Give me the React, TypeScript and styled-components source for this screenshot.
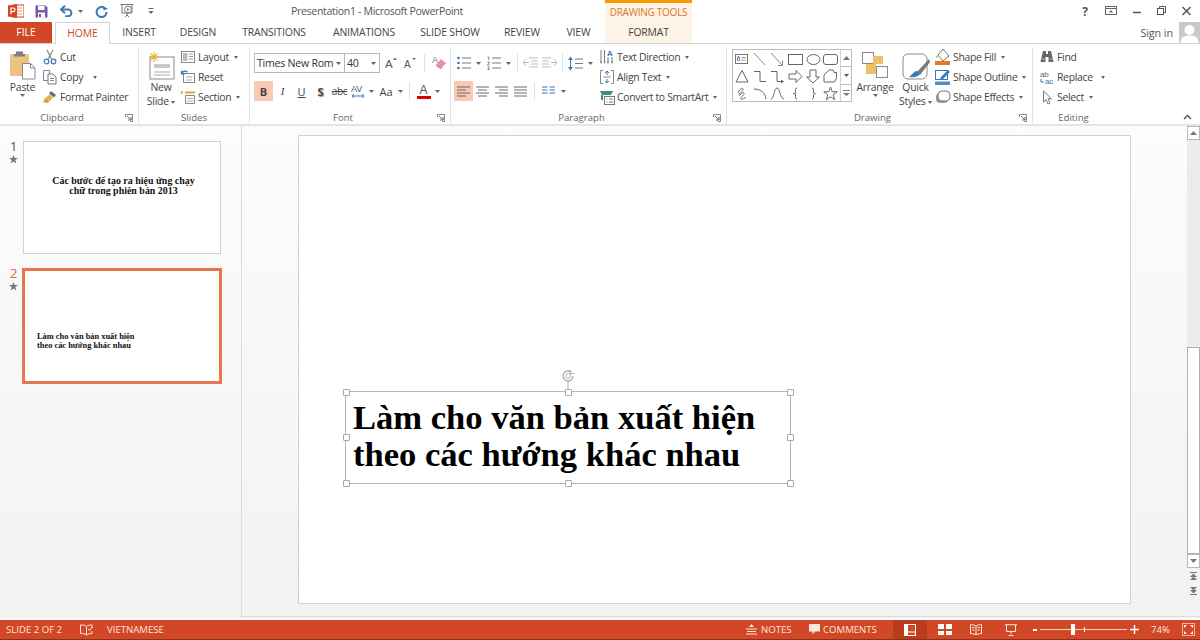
import React from 'react';
import styled, { createGlobalStyle } from 'styled-components';

const GlobalStyle = createGlobalStyle`
  html, body { margin: 0; padding: 0; background: #fff; overflow: hidden; }
  * { box-sizing: border-box; }
  #root { width: 1200px; height: 640px; font-family: 'Open Sans', 'Noto Sans', sans-serif; color: #444; }
`;

// --- shell ---
const Page = styled.div`
  width: 1200px;
  height: 640px;
  display: flex;
  flex-direction: column;
  overflow: hidden;
`;

const TitleBar = styled.div`
  height: 22px;
  display: flex;
  align-items: stretch;
`;

const Qat = styled.div`
  width: 291px;
  display: flex;
  align-items: center;
  padding-left: 8px;
`;

const QatSlot = styled.div<{ $w: number }>`
  width: ${p => p.$w}px;
  display: flex;
  align-items: center;
`;

const WindowTitle = styled.div`
  width: 314px;
  font-size: 10.6px;
  letter-spacing: -0.35px;
  line-height: 22px;
  color: #555;
`;

const ContextTitle = styled.div`
  width: 87px;
  background: #fdf3e7;
  border-top: 3px solid #f59a00;
  color: #d9772b;
  font-size: 10px;
  letter-spacing: -0.25px;
  line-height: 19px;
  text-align: center;
  white-space: nowrap;
`;

const WindowControls = styled.div`
  margin-left: auto;
  display: flex;
  align-items: center;
  padding-right: 9px;
  gap: 16px;
`;

const HelpMark = styled.span`
  font-weight: 700;
  font-size: 12px;
  color: #555;
  margin-right: 1px;
`;

const TabRow = styled.div`
  height: 22px;
  display: flex;
  border-bottom: 1px solid #d4d4d4;
`;

const Tab = styled.div<{ $w: number; $active?: boolean; $context?: boolean }>`
  width: ${p => p.$w}px;
  height: ${p => (p.$active ? '22px' : '21px')};
  font-size: 10.4px;
  letter-spacing: -0.15px;
  line-height: 21px;
  text-align: center;
  color: ${p => (p.$active ? '#d24726' : '#444')};
  background: ${p => (p.$active ? '#fff' : p.$context ? '#fdf3e7' : 'transparent')};
  border: ${p => (p.$active ? '1px solid #d4d4d4' : 'none')};
  border-bottom: none;
  white-space: nowrap;
`;

const FileTab = styled.div`
  width: 52px;
  height: 21px;
  margin-right: 3px;
  background: #d24726;
  color: #fff;
  font-size: 10.4px;
  line-height: 21px;
  text-align: center;
`;

const SignIn = styled.div`
  margin-left: auto;
  display: flex;
  align-items: center;
  font-size: 10.8px;
  letter-spacing: -0.1px;
  gap: 6px;
  height: 21px;
  color: #555;
`;

const Avatar = styled.div`
  width: 21px;
  height: 21px;
  background: #c9c9c9;
  overflow: hidden;
`;

// --- ribbon ---
const Ribbon = styled.div`
  height: 82px;
  display: flex;
  background: #fff;
  border-bottom: 2px solid #e4e4e4;
  position: relative;
`;

const Group = styled.div<{ $w: number; $last?: boolean }>`
  width: ${p => p.$w}px;
  height: 77px;
  margin-top: 3px;
  position: relative;
  display: flex;
  flex-direction: column;
  border-right: ${p => (p.$last ? 'none' : '1px solid #e2e2e2')};
`;

const GroupBody = styled.div<{ $pad?: number }>`
  height: 64px;
  display: flex;
  padding-left: ${p => p.$pad ?? 0}px;
`;

const GroupLabel = styled.div<{ $launcher?: boolean }>`
  height: 13px;
  font-size: 9.6px;
  line-height: 13px;
  text-align: center;
  color: #666;
  padding-right: ${p => (p.$launcher ? 14 : 0)}px;
`;

const Launcher = styled.svg`
  position: absolute;
  right: 5px;
  bottom: 2px;
  width: 8px;
  height: 8px;
`;

const BigButton = styled.div<{ $w: number; $ml?: number }>`
  width: ${p => p.$w}px;
  margin-left: ${p => p.$ml ?? 0}px;
  display: flex;
  flex-direction: column;
  align-items: center;
  font-size: 10.4px;
  letter-spacing: -0.25px;
  line-height: 14px;
  color: #444;
  text-align: center;
  white-space: nowrap;
`;

const BigIcon = styled.div`
  height: 33px;
  flex: none;
  display: flex;
  align-items: flex-end;
  justify-content: center;
`;

const SmallColumn = styled.div<{ $ml?: number }>`
  display: flex;
  flex-direction: column;
  margin-left: ${p => p.$ml ?? 0}px;
`;

const SmallButton = styled.div`
  height: 20px;
  display: flex;
  align-items: center;
  gap: 2px;
  font-size: 10.4px;
  letter-spacing: -0.3px;
  color: #444;
  white-space: nowrap;
`;

const Caret = styled.span<{ $ml?: number }>`
  display: inline-block;
  vertical-align: middle;
  width: 0;
  height: 0;
  margin-left: ${p => p.$ml ?? 3}px;
  border-left: 2.5px solid transparent;
  border-right: 2.5px solid transparent;
  border-top: 3px solid #666;
`;

const ToolRows = styled.div<{ $w?: number }>`
  display: flex;
  flex-direction: column;
  padding-top: 6px;
  gap: 8px;
  ${p => (p.$w ? `width: ${p.$w}px;` : '')}
`;

const ToolRow = styled.div`
  height: 20px;
  display: flex;
  align-items: center;
`;

const ToolBtn = styled.div<{ $w?: number; $on?: boolean; $ml?: number }>`
  width: ${p => p.$w ?? 19}px;
  height: 20px;
  margin-left: ${p => p.$ml ?? 0}px;
  display: flex;
  align-items: center;
  justify-content: center;
  background: ${p => (p.$on ? '#f9c9b3' : 'transparent')};
  color: #444;
  font-size: 11px;
  flex: none;
`;

const BoldGlyph = styled.span`
  font-weight: 700;
`;

const ItalicGlyph = styled.span`
  font-style: italic;
  font-family: 'Liberation Serif', serif;
`;

const UnderGlyph = styled.span`
  text-decoration: underline;
`;

const ShadowGlyph = styled.span`
  font-weight: 700;
  text-shadow: 1px 1px 1px #999;
`;

const StrikeGlyph = styled.span`
  text-decoration: line-through;
  font-size: 10px;
  letter-spacing: -0.3px;
`;

const ToolSep = styled.div<{ $mx?: number }>`
  width: 1px;
  height: 18px;
  margin: 0 ${p => p.$mx ?? 5}px;
  background: #e0e0e0;
  flex: none;
`;

const Select = styled.div<{ $w: number }>`
  width: ${p => p.$w}px;
  height: 20px;
  margin-right: -1px;
  border: 1px solid #b8b8b8;
  display: flex;
  align-items: center;
  justify-content: space-between;
  padding: 0 3px 0 2px;
  font-size: 10.6px;
  letter-spacing: -0.25px;
  color: #333;
  white-space: nowrap;
`;

const Gallery = styled.div`
  width: 120px;
  height: 53px;
  margin: 2px 0 0 5px;
  border: 1px solid #bcbcbc;
  display: flex;
`;

const ShapeGrid = styled.div`
  width: 107px;
  padding: 1px 0 0 1px;
  display: grid;
  grid-template-columns: repeat(6, 17.6px);
  grid-auto-rows: 17px;
`;

const ShapeCell = styled.div`
  display: flex;
  align-items: center;
  justify-content: center;
`;

const GalleryScroll = styled.div`
  flex: 1;
  display: flex;
  flex-direction: column;
  border-left: 1px solid #d0d0d0;
`;

const GalleryArrow = styled.div<{ $line?: boolean }>`
  flex: 1;
  display: flex;
  align-items: center;
  justify-content: center;
  border-top: ${p => (p.$line ? '1px solid #bcbcbc' : 'none')};
`;

const Collapse = styled.svg`
  position: absolute;
  right: 8px;
  top: 70px;
  width: 9px;
  height: 6px;
`;

// --- body ---
const Body = styled.div`
  height: 494px;
  display: flex;
  background: linear-gradient(180deg, #fcfcfc 0%, #f2f2f2 100%);
`;

const ThumbPane = styled.div`
  width: 242px;
  flex: none;
  border-right: 1px solid #dcdcdc;
  padding-top: 15px;
  display: flex;
  flex-direction: column;
  gap: 14px;
`;

const ThumbRow = styled.div`
  display: flex;
`;

const ThumbMeta = styled.div<{ $active?: boolean }>`
  width: 22px;
  padding-left: 5px;
  margin-top: -2px;
  display: flex;
  flex-direction: column;
  align-items: center;
  gap: 2px;
  font-size: 13.5px;
  line-height: 14px;
  color: ${p => (p.$active ? '#d9694a' : '#555')};
`;

const Thumb = styled.div<{ $active?: boolean }>`
  width: ${p => (p.$active ? '200px' : '198px')};
  height: ${p => (p.$active ? '116px' : '113px')};
  margin-left: ${p => (p.$active ? '0' : '1px')};
  background: #fff;
  border: ${p => (p.$active ? '3px solid #ea7350' : '1px solid #d2d2d2')};
  display: flex;
  flex-direction: column;
  font-family: 'Liberation Serif', serif;
  font-weight: bold;
  color: #111;
`;

const ThumbTitle = styled.div`
  margin-top: 34px;
  padding-left: 3px;
  font-size: 9.95px;
  line-height: 10px;
  text-align: center;
  white-space: nowrap;
`;

const ThumbText = styled.div`
  margin: 61px 0 0 12px;
  font-size: 8.4px;
  line-height: 9px;
  white-space: nowrap;
`;

const Editor = styled.div`
  flex: 1;
  border-bottom: 1px solid #dcdcdc;
  height: 491px;
  padding: 9px 0 0 56px;
  display: flex;
`;

const Slide = styled.div`
  width: 833px;
  height: 469px;
  position: relative;
  background: #fff;
  border: 1px solid #d2d2d2;
`;

const TextBox = styled.div`
  position: absolute;
  left: 46px;
  top: 255px;
  width: 446px;
  height: 93px;
  border: 1px solid #b4b4b4;
  padding: 7px 0 0 7px;
  font-family: 'Liberation Serif', serif;
  font-weight: bold;
  font-size: 34.55px;
  line-height: 37px;
  color: #000;
  white-space: nowrap;
`;

const Handle = styled.span<{ $x: number; $y: number }>`
  position: absolute;
  left: ${p => p.$x}%;
  top: ${p => p.$y}%;
  width: 7px;
  height: 7px;
  margin: -3.5px 0 0 -3.5px;
  background: #fff;
  border: 1px solid #a8a8a8;
  border-radius: 1px;
`;

const Rotate = styled.svg`
  position: absolute;
  left: 214px;
  top: -23px;
  width: 16px;
  height: 20px;
`;

const VScroll = styled.div`
  width: 13px;
  margin-left: 56px;
  display: flex;
  flex-direction: column;
  margin-top: -9px;
`;

const ScrollBtn = styled.div<{ $h?: number; $plain?: boolean }>`
  height: ${p => p.$h ?? 14}px;
  background: ${p => (p.$plain ? 'transparent' : '#fff')};
  border: ${p => (p.$plain ? 'none' : '1px solid #b8b8b8')};
  display: flex;
  align-items: center;
  justify-content: center;
`;

const ScrollTrack = styled.div`
  height: 207px;
  background: #ececec;
`;

const ScrollThumb = styled.div`
  height: 207px;
  background: #fff;
  border: 1px solid #b0b0b0;
`;

// --- status bar ---
const StatusBar = styled.div`
  height: 20px;
  margin-top: 2px;
  display: flex;
  align-items: center;
  background: #d24726;
  border-bottom: 1px solid #8e2f17;
  color: #fbe5dc;
  font-size: 9.6px;
  white-space: nowrap;
`;

const StatusText = styled.span<{ $ml: number; $w?: number }>`
  margin-left: ${p => p.$ml}px;
  ${p => (p.$w ? `width: ${p.$w}px;` : '')}
  display: flex;
  align-items: center;
  flex: none;
`;

const ViewBtn = styled.div<{ $w: number; $on?: boolean }>`
  width: ${p => p.$w}px;
  height: 19px;
  flex: none;
  display: flex;
  align-items: center;
  justify-content: center;
  background: ${p => (p.$on ? '#b93c1e' : 'transparent')};
`;

const ZoomTrack = styled.div`
  width: 87px;
  height: 1px;
  margin: 0 3px;
  background: #f6d4c8;
  position: relative;
  flex: none;
`;

const ZoomThumb = styled.span`
  position: absolute;
  left: 31px;
  top: -5px;
  width: 4px;
  height: 11px;
  background: #fff;
`;

const ZoomTick = styled.span`
  position: absolute;
  left: 44px;
  top: -2px;
  width: 1px;
  height: 5px;
  background: #fff;
`;

// --- icons ---
const IconSvg = styled.svg`
  flex: none;
  display: block;
`;

const Svg = ({ w = 16, h = 16, children }: { w?: number; h?: number; children: React.ReactNode }) => (
  <IconSvg width={w} height={h} viewBox={`0 0 ${w} ${h}`} fill="none">
    {children}
  </IconSvg>
);

const Drop = ({ color = '#666' }: { color?: string }) => (
  <IconSvg width="5" height="3" viewBox="0 0 5 3">
    <path d="M0 0h5L2.500 3z" fill={color} />
  </IconSvg>
);

const PptLogo = () => (
  <Svg w={16} h={14}>
    <rect x="6" y="1" width="10" height="12" fill="#fff" stroke="#d24726" />
    <path d="M8 4h6M8 7h6M8 10h6" stroke="#e9967d" />
    <path d="M0 1.500 9 0v14l-9-1.500z" fill="#d24726" />
    <path d="M3 10V4h2.200a1.600 1.600 0 0 1 0 3.600H3" stroke="#fff" strokeWidth="1.200" />
  </Svg>
);

const SaveIcon = () => (
  <Svg w={13} h={13}>
    <path d="M.5.5h10l2 2v10H.5z" fill="#7c5aa6" />
    <rect x="3" y="1" width="6.500" height="4" fill="#fff" />
    <rect x="3" y="7.500" width="7" height="5" fill="#fff" />
    <rect x="4" y="9" width="2" height="3" fill="#7c5aa6" />
  </Svg>
);

const UndoIcon = () => (
  <Svg w={13} h={12}>
    <path d="M1.500 4.500H8a3.400 3.400 0 0 1 0 6.800H5" stroke="#3b79b8" strokeWidth="2" />
    <path d="M5 .8 1 4.500 5 8.200" stroke="#3b79b8" strokeWidth="2" />
  </Svg>
);

const RedoIcon = () => (
  <Svg w={13} h={13}>
    <path d="M7.800 2.200A5 5 0 1 0 11.600 7" stroke="#3b79b8" strokeWidth="2" />
    <path d="M8 0v5h4.500z" fill="#3b79b8" transform="rotate(-15 9 3)" />
  </Svg>
);

const PresentIcon = () => (
  <Svg w={16} h={16}>
    <path d="M.5 1.500h13M2 1.500v8.500h10V1.500" stroke="#777" />
    <circle cx="8" cy="6.500" r="3.400" stroke="#5b8f6f" />
    <path d="M7 4.800v3.400l2.600-1.700z" fill="#5b8f6f" />
    <path d="M7 10v2M5 14l2-2 2 2" stroke="#777" />
  </Svg>
);

const QatMore = () => (
  <Svg w={6} h={8}>
    <path d="M.5 1.500h5" stroke="#666" />
    <path d="M.5 4h5L3 7z" fill="#666" />
  </Svg>
);

const PasteIcon = () => (
  <Svg w={27} h={30}>
    <rect x="1" y="4" width="19" height="22" rx="1" fill="#e8c47f" />
    <path d="M7 4V1.500h7V4h2v2.500H5V4z" fill="#7d7d7d" />
    <path d="M13.500 13.500h8l4.500 4.500v11h-12.500z" fill="#fff" stroke="#8a8a8a" />
    <path d="M21.500 13.500V18H26" stroke="#8a8a8a" />
  </Svg>
);

const CutIcon = () => (
  <Svg>
    <path d="M5 1l4.500 9M11 1 6 10" stroke="#888" strokeWidth="1.200" />
    <circle cx="4.500" cy="12.500" r="2.300" stroke="#3b79b8" strokeWidth="1.200" />
    <circle cx="11.500" cy="12.500" r="2.300" stroke="#3b79b8" strokeWidth="1.200" />
  </Svg>
);

const CopyIcon = () => (
  <Svg>
    <path d="M1.500 1.500h6v10h-6z" fill="#fff" stroke="#6f8fb0" />
    <path d="M6 5h5l3 3v7H6z" fill="#fff" stroke="#777" />
    <path d="M8 9.500h4M8 11.500h4" stroke="#888" />
  </Svg>
);

const PainterIcon = () => (
  <Svg>
    <path d="M9 2l5 4-2 2.500-5-4z" fill="#6a6a6a" />
    <path d="M7.500 5.500 11 8.500 6 14 1 13.500 2 10z" fill="#e2b45a" />
    <path d="M3 11l3 2" stroke="#b7863a" />
  </Svg>
);

const NewSlideIcon = () => (
  <Svg w={27} h={28}>
    <rect x="2" y="5" width="24" height="22" fill="#fff" stroke="#8a8a8a" />
    <rect x="6" y="12" width="16" height="4" fill="#c9c9c9" />
    <path d="M6 20h16M6 23h16" stroke="#aaa" />
    <path d="M6 0v10M1 5h10M2.500 1.500l7 7M9.500 1.500l-7 7" stroke="#f0b23c" strokeWidth="1.200" />
  </Svg>
);

const LayoutIcon = () => (
  <Svg>
    <rect x="1.500" y="2.500" width="13" height="11" fill="#fff" stroke="#888" />
    <rect x="3" y="4" width="4.500" height="8" fill="#bbb" />
    <path d="M9 5h4M9 7.500h4M9 10h4" stroke="#999" />
  </Svg>
);

const ResetIcon = () => (
  <Svg>
    <rect x="3.500" y="4.500" width="11" height="9" fill="#fff" stroke="#888" />
    <path d="M6 8h6M6 11h6" stroke="#aaa" />
    <path d="M1 4.500a4 3 0 0 1 6.500-1.500" stroke="#3b79b8" strokeWidth="1.400" />
    <path d="M1 1v4.500h4z" fill="#3b79b8" />
  </Svg>
);

const SectionIcon = () => (
  <Svg>
    <path d="M5.500 6.500h9v8h-9z" fill="#fff" stroke="#888" />
    <path d="M5 3.500h10" stroke="#e0a24a" strokeWidth="2" />
    <path d="M7 9.500h6M7 12h6" stroke="#aaa" />
    <path d="M1 1.500l2.500 2-2.500 2z" fill="#e0a24a" />
  </Svg>
);

const BulletsIcon = () => (
  <Svg w={14} h={14}>
    <circle cx="1.500" cy="2" r="1.300" fill="#3b79b8" />
    <circle cx="1.500" cy="7" r="1.300" fill="#3b79b8" />
    <circle cx="1.500" cy="12" r="1.300" fill="#3b79b8" />
    <path d="M5 2h9M5 7h9M5 12h9" stroke="#777" />
  </Svg>
);

const NumberingIcon = () => (
  <Svg w={14} h={14}>
    <path d="M.5 1h1.300v3M.5 6h2L.5 9h2M.5 11h2l-1 1 1 1.500H.5" stroke="#3b79b8" strokeWidth=".8" />
    <path d="M5 2h9M5 7h9M5 12h9" stroke="#777" />
  </Svg>
);

const IndentIcon = ({ flip }: { flip?: boolean }) => (
  <Svg w={15} h={12}>
    <g transform={flip ? 'translate(15 0) scale(-1 1)' : undefined}>
      <path d="M6 1h9M8 4h7M8 7h7M6 10h9" stroke="#bdbdbd" />
      <path d="M0 5.500h6M3 2.500l-3 3 3 3" stroke="#a9bccd" />
    </g>
  </Svg>
);

const LineSpacingIcon = () => (
  <Svg w={15} h={15}>
    <path d="M2.500 2v11" stroke="#3b79b8" />
    <path d="M0 4l2.500-3.500L5 4zM0 11l2.500 3.500L5 11z" fill="#3b79b8" />
    <path d="M7 3h8M7 7.500h8M7 12h8" stroke="#777" />
  </Svg>
);

const AlignIcon = ({ kind }: { kind: 'left' | 'center' | 'right' | 'justify' }) => {
  const lines = {
    left: 'M0 1h13M0 4h9M0 7h13M0 10h9',
    center: 'M0 1h13M2 4h9M0 7h13M2 10h9',
    right: 'M0 1h13M4 4h9M0 7h13M4 10h9',
    justify: 'M0 1h13M0 4h13M0 7h13M0 10h13',
  }[kind];
  return (
    <Svg w={13} h={11}>
      <path d={lines} stroke="#6a6a6a" />
    </Svg>
  );
};

const ColumnsIcon = () => (
  <Svg w={13} h={10}>
    <path d="M0 1h5.500M7.500 1H13M0 4h5.500M7.500 4H13M0 7h5.500M7.500 7H13" stroke="#3b79b8" />
  </Svg>
);

const TextDirectionIcon = () => (
  <Svg w={15} h={16}>
    <path d="M1 1v13M4.500 1v13M8 8v6M12 8v6" stroke="#777" />
    <path d="M0 12.500h2L1 15zM3.500 12.500h2l-1 2.500zM7 12.500h2L8 15zM11 12.500h2l-1 2.500z" fill="#777" />
    <text x="7" y="7" fontFamily="Liberation Sans, sans-serif" fontSize="8" fontWeight="bold" fill="#3b79b8">A</text>
  </Svg>
);

const AlignTextIcon = () => (
  <Svg w={15} h={16}>
    <path d="M3 1.500H.5v13H3M11 1.500h2.500v13H11" stroke="#888" />
    <path d="M7 2v4M7 10v4M5 4l2-2 2 2M5 12l2 2 2-2" stroke="#3b79b8" />
    <path d="M3.500 8h7" stroke="#888" />
  </Svg>
);

const SmartArtIcon = () => (
  <Svg w={15} h={16}>
    <path d="M0 2h13l-2 4H2z" fill="#3f8f7c" />
    <path d="M2 6v5" stroke="#3f8f7c" strokeWidth="2" />
    <rect x="4.500" y="7.500" width="10" height="8" fill="#fff" stroke="#777" />
    <path d="M6.500 10h1M9 10h4M6.500 13h1M9 13h4" stroke="#777" />
  </Svg>
);

const ArrangeIcon = () => (
  <Svg w={26} h={28}>
    <rect x=".5" y=".5" width="11" height="11" fill="#fff" stroke="#8a8a8a" />
    <rect x="11" y="4" width="10" height="8" fill="#eec06a" />
    <rect x="4" y="12" width="10" height="10" fill="#eec06a" />
    <rect x="14.500" y="14.500" width="11" height="11" fill="#fff" stroke="#8a8a8a" />
  </Svg>
);

const QuickStylesIcon = () => (
  <Svg w={28} h={27}>
    <rect x="1" y="1" width="24" height="25" rx="5" fill="#fff" stroke="#8a8a8a" />
    <path d="M27 6 15 19l3 3L28 9z" fill="#777" />
    <path d="M15 18c-3 0-4 3-8 6 5 1 10-1 11-3z" fill="#3b79b8" />
  </Svg>
);

const ShapeFillIcon = () => (
  <Svg>
    <path d="M8 0 14 7 8 12 3 6z" fill="#fff" stroke="#777" />
    <path d="M2 6c-1 2-1 3 0 3s1-1 0-3z" fill="#d98a3c" />
    <rect x="0" y="12" width="15" height="4" fill="#e07b2b" />
  </Svg>
);

const ShapeOutlineIcon = () => (
  <Svg>
    <rect x=".5" y="1.500" width="12" height="9" fill="#fff" stroke="#3b79b8" />
    <path d="M13 1 6 8l-1 3 3-1 7-7z" fill="#3b79b8" />
    <rect x="0" y="12.500" width="15" height="3.500" fill="#4a8fd0" />
  </Svg>
);

const ShapeEffectsIcon = () => (
  <Svg>
    <rect x="1" y="4" width="12" height="10" rx="4" fill="#9a9a9a" />
    <rect x="3" y="2" width="12" height="10" rx="4" fill="#fff" stroke="#777" />
  </Svg>
);

const FindIcon = () => (
  <Svg w={15} h={14}>
    <path d="M3 1h3v3h2V1h3l2.500 11H8.500V7h-3v5H.5z" fill="#666" />
    <path d="M2 9h3M9.500 9h3" stroke="#bbb" />
  </Svg>
);

const ReplaceIcon = () => (
  <Svg w={15} h={15}>
    <text x="0" y="6.500" fontFamily="Liberation Sans, sans-serif" fontSize="8" fill="#666">ab</text>
    <text x="5" y="14" fontFamily="Liberation Sans, sans-serif" fontSize="8" fill="#3b79b8">ac</text>
    <path d="M1 9v3h3" stroke="#3b79b8" />
  </Svg>
);

const SelectIcon = () => (
  <Svg w={15} h={15}>
    <path d="M3.500 1v11l2.600-2.400 1.900 4.400 2-.9L8 8.800h3.500z" fill="#fff" stroke="#777" />
  </Svg>
);

const EraserIcon = () => (
  <Svg w={14} h={16}>
    <text x="0" y="8" fontFamily="Liberation Sans, sans-serif" fontSize="9" fill="#777">A</text>
    <path d="M9 4l5 4-5 6-5-4z" fill="#ee8fa0" />
    <path d="M4 10l5 4" stroke="#c76a7e" />
  </Svg>
);

const GrowFont = ({ shrink }: { shrink?: boolean }) => (
  <Svg w={13} h={15}>
    <text x="0" y="12" fontFamily="Liberation Sans, sans-serif" fontSize={shrink ? 10 : 11.5} fill="#555">A</text>
    <path d={shrink ? 'M8 2h4l-2 2z' : 'M8 4h4l-2-2.500z'} fill="#3b79b8" />
  </Svg>
);

const FontColor = () => (
  <Svg w={14} h={15}>
    <text x="2.500" y="10" fontFamily="Liberation Sans, sans-serif" fontSize="12" fill="#555">A</text>
    <rect x="0" y="12" width="14" height="3" fill="#e00000" />
  </Svg>
);

const CharSpacing = () => (
  <Svg w={14} h={15}>
    <text x="0" y="8" fontFamily="Liberation Sans, sans-serif" fontSize="9" fill="#555">AV</text>
    <path d="M1 12h12M3 10l-2 2 2 2M11 10l2 2-2 2" stroke="#3b79b8" />
  </Svg>
);

const shapeStroke = { stroke: '#666', fill: 'none' } as const;
const shapes: React.ReactNode[] = [
  <g key="tb"><rect x=".5" y="2.500" width="12" height="9" fill="#fff" stroke="#777" /><path d="M6.500 5.500H11M6.500 8H11M2 8.500h3" stroke="#999" /><path d="M2 8l1.500-4L5 8" stroke="#3b79b8" /></g>,
  <path key="l" d="M1 1l11 12" stroke="#888" />,
  <g key="a"><path d="M1 1l11 12" stroke="#888" /><path d="M12.500 8.500v5H8" stroke="#888" /></g>,
  <rect key="r" x=".5" y="2.500" width="14" height="10" {...shapeStroke} />,
  <ellipse key="e" cx="7.500" cy="7.500" rx="6.500" ry="5" {...shapeStroke} />,
  <rect key="rr" x=".5" y="2.500" width="14" height="10" rx="2.500" {...shapeStroke} />,
  <path key="t" d="M7 1.500l6 11.500H1z" {...shapeStroke} />,
  <path key="el" d="M1 2.500h6v10h6" {...shapeStroke} />,
  <g key="ea"><path d="M1 2.500h6v10h5" {...shapeStroke} /><path d="M11 10.500v4l3-2z" fill="#666" /></g>,
  <path key="ra" d="M1 5h7V1.500l6 6-6 6V10H1z" {...shapeStroke} />,
  <path key="da" d="M4 1h6v7h3.500l-6.500 6-6.500-6H4z" {...shapeStroke} />,
  <path key="sn" d="M1 13V6l5-5h4l1 2.500h2.500V9l-2 4z" {...shapeStroke} />,
  <path key="sc" d="M3 7c1-3 4-6 5-4S3 8 4 9s4-4 5-2-5 5-3 6 3-2 5-1" {...shapeStroke} />,
  <path key="ar" d="M1 3c6 0 11 3 12 10" {...shapeStroke} />,
  <path key="cv" d="M1 13c3 0 3-11 6-11s3 11 7 11" {...shapeStroke} />,
  <path key="lb" d="M9 2C7 2 7.500 4 7.500 6S7 7.500 5.500 7.500C7 7.500 7.500 7 7.500 9s-.5 4 1.500 4" {...shapeStroke} />,
  <path key="rb" d="M6 2c2 0 1.500 2 1.500 4S8 7.500 9.500 7.500C8 7.500 7.500 8 7.500 9s.5 4-1.500 4" {...shapeStroke} />,
  <path key="st" d="M7.500 1l1.700 4.700 5 .1-4 3.100 1.500 4.800-4.200-2.900-4.200 2.900 1.500-4.800-4-3.100 5-.1z" {...shapeStroke} />,
];

const launcher = (
  <Launcher viewBox="0 0 8 8" fill="none">
    <path d="M.5 3V.5H7.500V7.500H5" stroke="#888" />
    <path d="M2 2l4 4M6 3v3H3" stroke="#666" />
  </Launcher>
);

const handles = [
  [0, 0], [50, 0], [100, 0],
  [0, 50], [100, 50],
  [0, 100], [50, 100], [100, 100],
];

const tabs = [
  { label: 'INSERT', w: 58 },
  { label: 'DESIGN', w: 60 },
  { label: 'TRANSITIONS', w: 92 },
  { label: 'ANIMATIONS', w: 88 },
  { label: 'SLIDE SHOW', w: 84 },
  { label: 'REVIEW', w: 60 },
  { label: 'VIEW', w: 53 },
];

const Star = () => (
  <Svg w={9} h={9}>
    <path d="M4.500 0l1.200 3h3.300L6.300 5l1 3.500-2.800-2-2.800 2 1-3.500L0 3h3.300z" fill="#777" />
  </Svg>
);

const ScrollGlyph = ({ up }: { up?: boolean }) => (
  <svg width="7" height="4" viewBox="0 0 7 4">
    <path d={up ? 'M0 4h7L3.500 0z' : 'M0 0h7L3.500 4z'} fill="#777" />
  </svg>
);

const DoubleGlyph = ({ up }: { up?: boolean }) => (
  <svg width="7" height="8" viewBox="0 0 7 8">
    <g transform={up ? undefined : 'translate(0 8) scale(1 -1)'}>
      <path d="M0 .5h7" stroke="#777" />
      <path d="M0 5h7L3.500 1.500zM0 8h7L3.500 4.500z" fill="#777" />
    </g>
  </svg>
);

const MoreGlyph = () => (
  <svg width="7" height="6" viewBox="0 0 7 6">
    <path d="M0 .5h7" stroke="#777" />
    <path d="M0 3h7L3.500 6z" fill="#777" />
  </svg>
);

export default function App() {
  return (
    <Page>
      <GlobalStyle />
      <TitleBar>
        <Qat>
          <QatSlot $w={27}><PptLogo /></QatSlot>
          <QatSlot $w={25}><SaveIcon /></QatSlot>
          <QatSlot $w={18}><UndoIcon /></QatSlot>
          <QatSlot $w={17}><Drop /></QatSlot>
          <QatSlot $w={25}><RedoIcon /></QatSlot>
          <QatSlot $w={28}><PresentIcon /></QatSlot>
          <QatSlot $w={10}><QatMore /></QatSlot>
        </Qat>
        <WindowTitle>Presentation1 - Microsoft PowerPoint</WindowTitle>
        <ContextTitle>DRAWING TOOLS</ContextTitle>
        <WindowControls>
          <HelpMark>?</HelpMark>
          <Svg w={12} h={10}>
            <rect x=".5" y=".5" width="11" height="8" stroke="#666" />
            <path d="M.5 2.500h11" stroke="#666" />
            <path d="M4 6.500l2-2.500 2 2.500z" fill="#666" />
          </Svg>
          <Svg w={8} h={10}><path d="M0 6.500h8" stroke="#555" strokeWidth="1.500" /></Svg>
          <Svg w={9} h={10}>
            <rect x=".5" y="2.500" width="6" height="6" stroke="#555" />
            <path d="M2.500 2.500V.5h6v6H6.500" stroke="#555" />
          </Svg>
          <Svg w={9} h={10}><path d="M.5 1l8 8M8.500 1l-8 8" stroke="#555" strokeWidth="1.500" /></Svg>
        </WindowControls>
      </TitleBar>

      <TabRow>
        <FileTab>FILE</FileTab>
        <Tab $w={55} $active>HOME</Tab>
        {tabs.map(t => (
          <Tab key={t.label} $w={t.w}>{t.label}</Tab>
        ))}
        <Tab $w={87} $context>FORMAT</Tab>
        <SignIn>
          Sign in
          <Avatar>
            <Svg w={21} h={21}>
              <circle cx="10.500" cy="8" r="5" fill="#fff" />
              <path d="M1.500 21c0-6 4-7.500 9-7.500s9 1.500 9 7.500z" fill="#fff" />
            </Svg>
          </Avatar>
        </SignIn>
      </TabRow>

      <Ribbon>
        <Group $w={139}>
          <GroupBody $pad={8}>
            <BigButton $w={29}>
              <BigIcon><PasteIcon /></BigIcon>
              <span>Paste</span>
              <Drop />
            </BigButton>
            <SmallColumn $ml={5}>
              <SmallButton><CutIcon />Cut</SmallButton>
              <SmallButton><CopyIcon />Copy<Caret $ml={8} /></SmallButton>
              <SmallButton><PainterIcon />Format Painter</SmallButton>
            </SmallColumn>
          </GroupBody>
          <GroupLabel $launcher>Clipboard</GroupLabel>
          {launcher}
        </Group>

        <Group $w={111}>
          <GroupBody $pad={5}>
            <BigButton $w={34}>
              <BigIcon><NewSlideIcon /></BigIcon>
              <span>New</span>
              <span>Slide <Caret $ml={0} /></span>
            </BigButton>
            <SmallColumn $ml={2}>
              <SmallButton><LayoutIcon />Layout<Caret /></SmallButton>
              <SmallButton><ResetIcon />Reset</SmallButton>
              <SmallButton><SectionIcon />Section<Caret /></SmallButton>
            </SmallColumn>
          </GroupBody>
          <GroupLabel>Slides</GroupLabel>
        </Group>

        <Group $w={201}>
          <GroupBody $pad={4}>
            <ToolRows>
              <ToolRow>
                <Select $w={91}>Times New Rom<Drop /></Select>
                <Select $w={36}>40<Drop /></Select>
                <ToolBtn $w={19} $ml={3}><GrowFont /></ToolBtn>
                <ToolBtn $w={19}><GrowFont shrink /></ToolBtn>
                <ToolSep $mx={4} />
                <ToolBtn $w={19}><EraserIcon /></ToolBtn>
              </ToolRow>
              <ToolRow>
                <ToolBtn $on><BoldGlyph>B</BoldGlyph></ToolBtn>
                <ToolBtn><ItalicGlyph>I</ItalicGlyph></ToolBtn>
                <ToolBtn><UnderGlyph>U</UnderGlyph></ToolBtn>
                <ToolBtn><ShadowGlyph>S</ShadowGlyph></ToolBtn>
                <ToolBtn><StrikeGlyph>abc</StrikeGlyph></ToolBtn>
                <ToolBtn $w={17}><CharSpacing /></ToolBtn>
                <ToolBtn $w={10}><Drop /></ToolBtn>
                <ToolBtn $w={20}>Aa</ToolBtn>
                <ToolBtn $w={8}><Drop /></ToolBtn>
                <ToolSep $mx={5} />
                <ToolBtn $w={17}><FontColor /></ToolBtn>
                <ToolBtn $w={10}><Drop /></ToolBtn>
              </ToolRow>
            </ToolRows>
          </GroupBody>
          <GroupLabel $launcher>Font</GroupLabel>
          {launcher}
        </Group>

        <Group $w={276}>
          <GroupBody $pad={3}>
            <ToolRows $w={146}>
              <ToolRow>
                <ToolBtn $w={19}><BulletsIcon /></ToolBtn>
                <ToolBtn $w={11}><Drop /></ToolBtn>
                <ToolBtn $w={19}><NumberingIcon /></ToolBtn>
                <ToolBtn $w={11}><Drop /></ToolBtn>
                <ToolSep $mx={3} />
                <ToolBtn $w={19}><IndentIcon /></ToolBtn>
                <ToolBtn $w={19}><IndentIcon flip /></ToolBtn>
                <ToolSep $mx={3} />
                <ToolBtn $w={19}><LineSpacingIcon /></ToolBtn>
                <ToolBtn $w={10}><Drop /></ToolBtn>
              </ToolRow>
              <ToolRow>
                <ToolBtn $on><AlignIcon kind="left" /></ToolBtn>
                <ToolBtn><AlignIcon kind="center" /></ToolBtn>
                <ToolBtn><AlignIcon kind="right" /></ToolBtn>
                <ToolBtn><AlignIcon kind="justify" /></ToolBtn>
                <ToolSep $mx={4} />
                <ToolBtn $w={19}><ColumnsIcon /></ToolBtn>
                <ToolBtn $w={10}><Drop /></ToolBtn>
              </ToolRow>
            </ToolRows>
            <SmallColumn>
              <SmallButton><TextDirectionIcon />Text Direction<Caret /></SmallButton>
              <SmallButton><AlignTextIcon />Align Text<Caret /></SmallButton>
              <SmallButton><SmartArtIcon />Convert to SmartArt<Caret /></SmallButton>
            </SmallColumn>
          </GroupBody>
          <GroupLabel $launcher>Paragraph</GroupLabel>
          {launcher}
        </Group>

        <Group $w={306}>
          <GroupBody>
            <Gallery>
              <ShapeGrid>
                {shapes.map((s, i) => (
                  <ShapeCell key={i}><Svg w={15} h={15}>{s}</Svg></ShapeCell>
                ))}
              </ShapeGrid>
              <GalleryScroll>
                <GalleryArrow><ScrollGlyph up /></GalleryArrow>
                <GalleryArrow $line><Drop color="#555" /></GalleryArrow>
                <GalleryArrow $line><MoreGlyph /></GalleryArrow>
              </GalleryScroll>
            </Gallery>
            <BigButton $w={44} $ml={1}>
              <BigIcon><ArrangeIcon /></BigIcon>
              <span>Arrange</span>
              <Drop />
            </BigButton>
            <BigButton $w={37}>
              <BigIcon><QuickStylesIcon /></BigIcon>
              <span>Quick</span>
              <span>Styles <Caret $ml={0} /></span>
            </BigButton>
            <SmallColumn $ml={1}>
              <SmallButton><ShapeFillIcon />Shape Fill<Caret /></SmallButton>
              <SmallButton><ShapeOutlineIcon />Shape Outline<Caret /></SmallButton>
              <SmallButton><ShapeEffectsIcon />Shape Effects<Caret /></SmallButton>
            </SmallColumn>
          </GroupBody>
          <GroupLabel $launcher>Drawing</GroupLabel>
          {launcher}
        </Group>

        <Group $w={81} $last>
          <GroupBody $pad={7}>
            <SmallColumn>
              <SmallButton><FindIcon />Find</SmallButton>
              <SmallButton><ReplaceIcon />Replace<Caret $ml={6} /></SmallButton>
              <SmallButton><SelectIcon />Select<Caret /></SmallButton>
            </SmallColumn>
          </GroupBody>
          <GroupLabel>Editing</GroupLabel>
        </Group>
        <Collapse viewBox="0 0 9 6" fill="none">
          <path d="M1 5l3.500-3.500L8 5" stroke="#555" strokeWidth="1.400" />
        </Collapse>
      </Ribbon>

      <Body>
        <ThumbPane>
          <ThumbRow>
            <ThumbMeta>1<Star /></ThumbMeta>
            <Thumb>
              <ThumbTitle>Các bước để tạo ra hiệu ứng chạy<br />chữ trong phiên bản 2013</ThumbTitle>
            </Thumb>
          </ThumbRow>
          <ThumbRow>
            <ThumbMeta $active>2<Star /></ThumbMeta>
            <Thumb $active>
              <ThumbText>Làm cho văn bản xuất hiện<br />theo các hướng khác nhau</ThumbText>
            </Thumb>
          </ThumbRow>
        </ThumbPane>
        <Editor>
          <Slide>
            <TextBox>
              Làm cho văn bản xuất hiện<br />theo các hướng khác nhau
              {handles.map(([x, y]) => (
                <Handle key={`${x}-${y}`} $x={x} $y={y} />
              ))}
              <Rotate viewBox="0 0 16 20" fill="none">
                <path d="M8 13v7" stroke="#a8a8a8" />
                <path d="M13 7a5 5 0 1 1-2-4" stroke="#a8a8a8" strokeWidth="1.300" />
                <circle cx="8" cy="7" r="2.500" stroke="#b8b8b8" />
                <path d="M10 1v3.500h4" stroke="#a8a8a8" />
              </Rotate>
            </TextBox>
          </Slide>
          <VScroll>
            <ScrollBtn><ScrollGlyph up /></ScrollBtn>
            <ScrollTrack />
            <ScrollThumb />
            <ScrollBtn><ScrollGlyph /></ScrollBtn>
            <ScrollBtn $plain $h={15}><DoubleGlyph up /></ScrollBtn>
            <ScrollBtn $plain $h={15}><DoubleGlyph /></ScrollBtn>
          </VScroll>
        </Editor>
      </Body>

      <StatusBar>
        <StatusText $ml={6} $w={74}>SLIDE 2 OF 2</StatusText>
        <Svg w={13} h={12}>
          <path d="M6.500 2.500C5 1 3 1 .5 1v8.500c2.500 0 4.500 0 6 1.500V2.500zM6.500 2.500C8 1 10 1 12 1v3M6.500 11c1-.9 2.500-1.300 5.500-1.500V7" stroke="#fbe5dc" />
          <path d="M8 5l1.500 1.500L12.500 3" stroke="#fbe5dc" />
        </Svg>
        <StatusText $ml={14} $w={639}>VIETNAMESE</StatusText>
        <Svg w={11} h={11}>
          <path d="M5.500 0l2.500 3H3z" fill="#fbe5dc" />
          <path d="M0 5h11M1 7.500h9M0 10h11" stroke="#fbe5dc" />
        </Svg>
        <StatusText $ml={4} $w={48}>NOTES</StatusText>
        <Svg w={11} h={11}>
          <path d="M0 0h11v7.500H6L3.500 10.500V7.500H0z" fill="#fbe5dc" />
        </Svg>
        <StatusText $ml={3} $w={70}>COMMENTS</StatusText>
        <ViewBtn $w={34} $on>
          <Svg w={12} h={12}>
            <rect x=".5" y=".5" width="11" height="11" fill="#d24726" stroke="#fff" />
            <rect x="0" y="0" width="4" height="12" fill="#fff" />
            <path d="M4 8h8" stroke="#fff" />
          </Svg>
        </ViewBtn>
        <ViewBtn $w={36}>
          <Svg w={14} h={11}>
            <path d="M0 0h6v5H0zM8 0h6v5H8zM0 7h6v4H0zM8 7h6v4H8z" fill="#fff" />
          </Svg>
        </ViewBtn>
        <ViewBtn $w={26}>
          <Svg w={12} h={11}>
            <path d="M6 2C5 1 3 .7.500.7v9C3 9.700 5 10 6 11c1-1 3-1.300 5.500-1.300v-9C9 .7 7 1 6 2zM6 2v9M2 3.500h2.500M2 6h2.500M7.500 3.500H10M7.500 6H10" stroke="#fbe5dc" />
          </Svg>
        </ViewBtn>
        <ViewBtn $w={44}>
          <Svg w={12} h={12}>
            <path d="M0 .7h12M1.500 1v6.500h9V1M6 7.500V10M3.500 11.500h5" stroke="#fbe5dc" />
          </Svg>
        </ViewBtn>
        <Svg w={4} h={2}><rect width="4" height="2" fill="#fff" /></Svg>
        <ZoomTrack>
          <ZoomThumb />
          <ZoomTick />
        </ZoomTrack>
        <Svg w={9} h={9}><path d="M4.500 0v9M0 4.500h9" stroke="#fff" strokeWidth="1.500" /></Svg>
        <StatusText $ml={12} $w={31}>74%</StatusText>
        <Svg w={13} h={13}>
          <rect x=".5" y=".5" width="12" height="12" stroke="#f3b8a5" />
          <path d="M2 2h3L2 5zM11 2H8l3 3zM2 11h3L2 8zM11 11H8l3-3z" fill="#fff" />
        </Svg>
      </StatusBar>
    </Page>
  );
}
